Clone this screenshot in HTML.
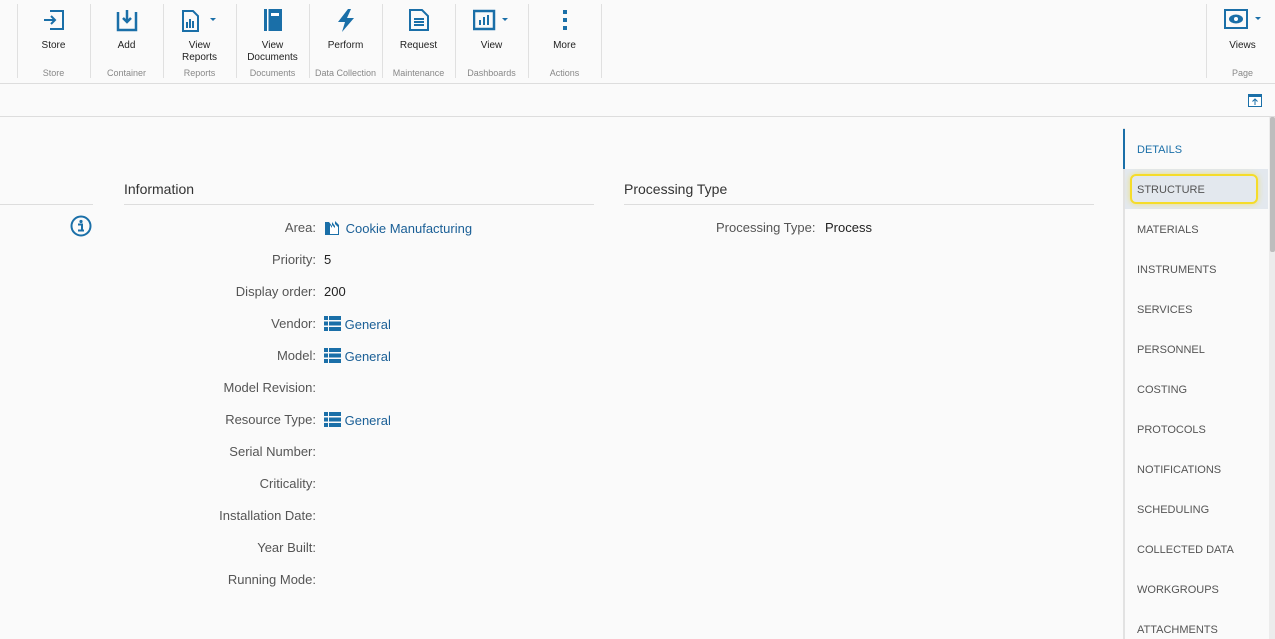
<!DOCTYPE html><html><head><meta charset="utf-8"><style>
*{margin:0;padding:0;box-sizing:border-box}
body{width:1275px;height:639px;overflow:hidden;background:#fafafa;font-family:"Liberation Sans",sans-serif;position:relative;color:#333}
.a{position:absolute}
.sep{position:absolute;top:4px;width:1px;height:74px;background:#e0e0e0}
.btn{position:absolute;width:73px;text-align:center;font-size:10px;color:#222;line-height:12px}
.grp{position:absolute;width:73px;text-align:center;font-size:9px;color:#888;top:68px}
.ic{position:absolute;top:8px}
.lbl{position:absolute;right:959px;font-size:13px;color:#555;white-space:nowrap}
.val{position:absolute;left:324px;font-size:13px;color:#222;white-space:nowrap}
.lnk{color:#1a5f96}
.nav{position:absolute;left:1137px;font-size:11px;color:#555}
</style></head><body>
<div class="a" style="left:0;top:83px;width:1275px;height:1px;background:#ddd"></div>
<div class="a" style="left:0;top:116px;width:1275px;height:1px;background:#ddd"></div>
<div class="sep" style="left:17px"></div><div class="sep" style="left:90px"></div><div class="sep" style="left:163px"></div><div class="sep" style="left:236px"></div><div class="sep" style="left:309px"></div><div class="sep" style="left:382px"></div><div class="sep" style="left:455px"></div><div class="sep" style="left:528px"></div><div class="sep" style="left:601px"></div><div class="sep" style="left:1206px"></div>
<svg class="ic" style="left:42px" width="24" height="24" viewBox="0 0 24 24" fill="none" stroke="#1a6fa8" stroke-width="2"><path d="M8 3h13v18H8M2 12h11M9 8l4 4-4 4"/></svg>
<svg class="ic" style="left:116px" width="22" height="24" viewBox="0 0 22 24" fill="none" stroke="#1a6fa8" stroke-width="2.5"><path d="M2 4v18h18V4M11 2v12M7 10l4 4 4-4"/></svg>
<svg class="ic" style="left:181px" width="40" height="24" viewBox="0 0 40 24"><path d="M2 3h10l5 5v15H2z" fill="none" stroke="#1a6fa8" stroke-width="2"/><rect x="5" y="14" width="2" height="6" fill="#1a6fa8"/><rect x="8" y="11" width="2" height="9" fill="#1a6fa8"/><rect x="11" y="13" width="2" height="7" fill="#1a6fa8"/><path d="M29 10h6l-3 3z" fill="#1a6fa8"/></svg>
<svg class="ic" style="left:262px" width="22" height="24" viewBox="0 0 22 24"><rect x="2" y="1" width="18" height="22" fill="#1a6fa8"/><rect x="5" y="1" width="1.5" height="22" fill="#fff"/><rect x="9" y="5" width="8" height="3" fill="#fff"/></svg>
<svg class="ic" style="left:334px" width="24" height="24" viewBox="0 0 24 24"><path d="M14 1L4 14h7l-3 10 12-14h-7l4-9z" fill="#1a6fa8"/></svg>
<svg class="ic" style="left:408px" width="22" height="24" viewBox="0 0 22 24" fill="none" stroke="#1a6fa8" stroke-width="2"><path d="M2 2h12l6 6v14H2zM6 11h10M6 14h10M6 17h10"/></svg>
<svg class="ic" style="left:473px" width="40" height="24" viewBox="0 0 40 24"><rect x="1" y="3" width="20" height="18" fill="none" stroke="#1a6fa8" stroke-width="2.5"/><rect x="6" y="12" width="2" height="5" fill="#1a6fa8"/><rect x="10" y="9" width="2" height="8" fill="#1a6fa8"/><rect x="14" y="7" width="2" height="10" fill="#1a6fa8"/><path d="M29 10h6l-3 3z" fill="#1a6fa8"/></svg>
<svg class="ic" style="left:559px" width="12" height="24" viewBox="0 0 12 24" fill="#1a6fa8"><rect x="4" y="2" width="4" height="4"/><rect x="4" y="10" width="4" height="4"/><rect x="4" y="18" width="4" height="4"/></svg>
<svg class="ic" style="left:1224px" width="40" height="24" viewBox="0 0 40 24"><rect x="1" y="2" width="22" height="18" fill="none" stroke="#1a6fa8" stroke-width="2"/><ellipse cx="12" cy="11" rx="7" ry="4.5" fill="#1a6fa8"/><circle cx="12" cy="11" r="2" fill="#fff"/><path d="M31 9h6l-3 3z" fill="#1a6fa8"/></svg>
<div class="btn" style="left:17px;top:40px">Store</div><div class="btn" style="left:90px;top:40px">Add</div>
<div class="btn" style="left:163px;top:40px">View<br>Reports</div><div class="btn" style="left:236px;top:40px">View<br>Documents</div>
<div class="btn" style="left:309px;top:40px">Perform</div><div class="btn" style="left:382px;top:40px">Request</div>
<div class="btn" style="left:455px;top:40px">View</div><div class="btn" style="left:528px;top:40px">More</div><div class="btn" style="left:1206px;top:40px">Views</div>
<div class="grp" style="left:17px">Store</div><div class="grp" style="left:90px">Container</div><div class="grp" style="left:163px">Reports</div><div class="grp" style="left:236px">Documents</div><div class="grp" style="left:309px">Data Collection</div><div class="grp" style="left:382px">Maintenance</div><div class="grp" style="left:455px">Dashboards</div><div class="grp" style="left:528px">Actions</div><div class="grp" style="left:1206px">Page</div>
<svg class="a" style="left:1248px;top:94px" width="14" height="13" viewBox="0 0 14 13"><rect x="0.5" y="0.5" width="13" height="12" fill="#fff" stroke="#1a6fa8"/><rect x="0" y="0" width="14" height="3" fill="#1a6fa8"/><path d="M7 11V5M4.5 7.5L7 5l2.5 2.5" stroke="#1a6fa8" fill="none"/></svg>
<div class="a" style="left:0;top:204px;width:93px;height:1px;background:#ddd"></div>
<svg class="a" style="left:70px;top:215px" width="22" height="22" viewBox="0 0 22 22"><circle cx="11" cy="11" r="9.5" fill="none" stroke="#1a6fa8" stroke-width="2"/><circle cx="11" cy="6.5" r="1.6" fill="#1a6fa8"/><path d="M8 9.5h4v6h2M8 15.5h6" stroke="#1a6fa8" stroke-width="2" fill="none"/></svg>
<div class="a" style="left:124px;top:181px;font-size:14px;color:#333">Information</div>
<div class="a" style="left:124px;top:204px;width:470px;height:1px;background:#ddd"></div>
<div class="a" style="left:624px;top:181px;font-size:14px;color:#333">Processing Type</div>
<div class="a" style="left:624px;top:204px;width:470px;height:1px;background:#ddd"></div>
<div class="lbl" style="top:220px">Area:</div><div class="val lnk" style="top:220px"><svg width="18" height="15" viewBox="0 0 18 15" style="vertical-align:-2px"><path d="M1 2h4v13H1zM5 2l3 4V2l3 4V1l4 4v10H5" fill="#1a6fa8"/><path d="M6 5l2 3V5l3 3V4l3 3v7H6z" fill="#fff"/></svg> Cookie Manufacturing</div>
<div class="lbl" style="top:252px">Priority:</div><div class="val" style="top:252px">5</div>
<div class="lbl" style="top:284px">Display order:</div><div class="val" style="top:284px">200</div>
<div class="lbl" style="top:316px">Vendor:</div><div class="val lnk" style="top:316px"><svg width="17" height="15" viewBox="0 0 17 15" fill="#1a6fa8" style="vertical-align:-2px"><rect x="0" y="0" width="4" height="4"/><rect x="5" y="0" width="12" height="4"/><rect x="0" y="5.5" width="4" height="4"/><rect x="5" y="5.5" width="12" height="4"/><rect x="0" y="11" width="4" height="4"/><rect x="5" y="11" width="12" height="4"/></svg> General</div>
<div class="lbl" style="top:348px">Model:</div><div class="val lnk" style="top:348px"><svg width="17" height="15" viewBox="0 0 17 15" fill="#1a6fa8" style="vertical-align:-2px"><rect x="0" y="0" width="4" height="4"/><rect x="5" y="0" width="12" height="4"/><rect x="0" y="5.5" width="4" height="4"/><rect x="5" y="5.5" width="12" height="4"/><rect x="0" y="11" width="4" height="4"/><rect x="5" y="11" width="12" height="4"/></svg> General</div>
<div class="lbl" style="top:380px">Model Revision:</div>
<div class="lbl" style="top:412px">Resource Type:</div><div class="val lnk" style="top:412px"><svg width="17" height="15" viewBox="0 0 17 15" fill="#1a6fa8" style="vertical-align:-2px"><rect x="0" y="0" width="4" height="4"/><rect x="5" y="0" width="12" height="4"/><rect x="0" y="5.5" width="4" height="4"/><rect x="5" y="5.5" width="12" height="4"/><rect x="0" y="11" width="4" height="4"/><rect x="5" y="11" width="12" height="4"/></svg> General</div>
<div class="lbl" style="top:444px">Serial Number:</div>
<div class="lbl" style="top:476px">Criticality:</div>
<div class="lbl" style="top:508px">Installation Date:</div>
<div class="lbl" style="top:540px">Year Built:</div>
<div class="lbl" style="top:572px">Running Mode:</div>
<div class="a" style="left:716px;top:220px;font-size:13px;color:#555">Processing Type:</div><div class="a" style="left:825px;top:220px;font-size:13px;color:#222">Process</div>
<div class="a" style="left:1123px;top:128px;width:2px;height:511px;background:#e2e2e2"></div>
<div class="a" style="left:1123px;top:129px;width:2px;height:40px;background:#1a6fa8"></div>
<div class="a" style="left:1125px;top:169px;width:143px;height:40px;background:#e3e8ee"></div>
<div class="a" style="left:1130px;top:174px;width:128px;height:30px;border:2px solid #f5dc2a;border-radius:6px;box-shadow:0 0 6px rgba(245,220,42,.6)"></div>
<div class="nav" style="top:144px;color:#1a6fa8">DETAILS</div>
<div class="nav" style="top:184px">STRUCTURE</div>
<div class="nav" style="top:224px">MATERIALS</div>
<div class="nav" style="top:264px">INSTRUMENTS</div>
<div class="nav" style="top:304px">SERVICES</div>
<div class="nav" style="top:344px">PERSONNEL</div>
<div class="nav" style="top:384px">COSTING</div>
<div class="nav" style="top:424px">PROTOCOLS</div>
<div class="nav" style="top:464px">NOTIFICATIONS</div>
<div class="nav" style="top:504px">SCHEDULING</div>
<div class="nav" style="top:544px">COLLECTED DATA</div>
<div class="nav" style="top:584px">WORKGROUPS</div>
<div class="nav" style="top:624px">ATTACHMENTS</div>
<div class="a" style="left:1269px;top:117px;width:6px;height:522px;background:#ececec"></div>
<div class="a" style="left:1270px;top:117px;width:5px;height:135px;background:#bdbdbd;border-radius:2px"></div>
</body></html>
